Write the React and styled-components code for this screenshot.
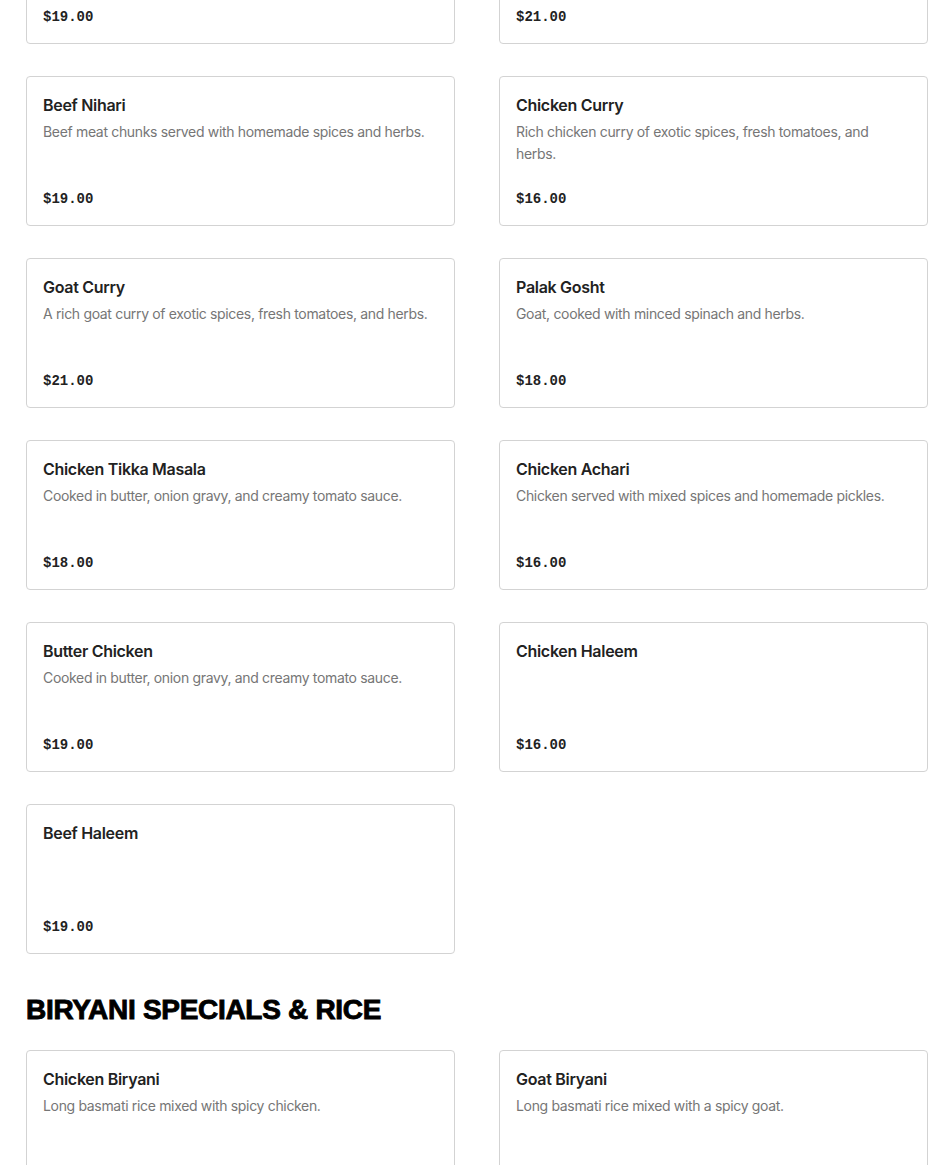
import React from "react";
import styled, { createGlobalStyle } from "styled-components";

const GlobalStyle = createGlobalStyle`
  body {
    margin: 0;
    background: #fff;
    font-family: "Inter", "Liberation Sans", sans-serif;
    color: #1f1f1f;
  }
`;

const Page = styled.div`
  padding: 0 22px 0 26px;
  margin-top: -106px;
`;

const Grid = styled.div`
  display: grid;
  grid-template-columns: repeat(2, 429px);
  column-gap: 44px;
  row-gap: 32px;
`;

const SectionTitle = styled.h2`
  margin: 39px 0 23px;
  font-family: "Liberation Sans", Arial, sans-serif;
  font-weight: 900;
  font-size: 28px;
  line-height: 34px;
  letter-spacing: -0.3px;
  color: #000;
  -webkit-text-stroke: 0.9px #000;
`;

const Card = styled.div`
  box-sizing: border-box;
  height: 150px;
  display: flex;
  flex-direction: column;
  padding: 16px 16px 15px;
  border: 1px solid #d3d3d3;
  border-radius: 4px;
  background: #fff;
`;

const Name = styled.div`
  font-size: 16px;
  line-height: 24px;
  font-weight: 600;
  letter-spacing: -0.3px;
  color: #222;
`;

const Desc = styled.div`
  margin-top: 4px;
  font-size: 14px;
  line-height: 22px;
  letter-spacing: -0.33px;
  color: #767676;
`;

const Price = styled.div`
  margin-top: auto;
  font-family: "Liberation Mono", "DejaVu Sans Mono", monospace;
  font-weight: 700;
  font-size: 14px;
  line-height: 22px;
  color: #222;
`;

const curries = [
  { name: "Lamb Nihari", desc: "Lamb meat chunks served with homemade spices and herbs.", price: "19.00" },
  { name: "Lamb Curry", desc: "A rich lamb curry of exotic spices, fresh tomatoes, and herbs.", price: "21.00" },
  { name: "Beef Nihari", desc: "Beef meat chunks served with homemade spices and herbs.", price: "19.00" },
  { name: "Chicken Curry", desc: "Rich chicken curry of exotic spices, fresh tomatoes, and herbs.", price: "16.00" },
  { name: "Goat Curry", desc: "A rich goat curry of exotic spices, fresh tomatoes, and herbs.", price: "21.00" },
  { name: "Palak Gosht", desc: "Goat, cooked with minced spinach and herbs.", price: "18.00" },
  { name: "Chicken Tikka Masala", desc: "Cooked in butter, onion gravy, and creamy tomato sauce.", price: "18.00" },
  { name: "Chicken Achari", desc: "Chicken served with mixed spices and homemade pickles.", price: "16.00" },
  { name: "Butter Chicken", desc: "Cooked in butter, onion gravy, and creamy tomato sauce.", price: "19.00" },
  { name: "Chicken Haleem", desc: "", price: "16.00" },
  { name: "Beef Haleem", desc: "", price: "19.00" },
];

const biryani = [
  { name: "Chicken Biryani", desc: "Long basmati rice mixed with spicy chicken.", price: "15.00" },
  { name: "Goat Biryani", desc: "Long basmati rice mixed with a spicy goat.", price: "18.00" },
];

const MenuCard = ({ item }) => (
  <Card>
    <Name>{item.name}</Name>
    {item.desc && <Desc>{item.desc}</Desc>}
    <Price>${item.price}</Price>
  </Card>
);

const App = () => (
  <>
    <GlobalStyle />
    <Page>
      <Grid>
        {curries.map((item, index) => (
          <MenuCard key={index} item={item} />
        ))}
      </Grid>
      <SectionTitle>BIRYANI SPECIALS &amp; RICE</SectionTitle>
      <Grid>
        {biryani.map((item, index) => (
          <MenuCard key={index} item={item} />
        ))}
      </Grid>
    </Page>
  </>
);

export default App;
